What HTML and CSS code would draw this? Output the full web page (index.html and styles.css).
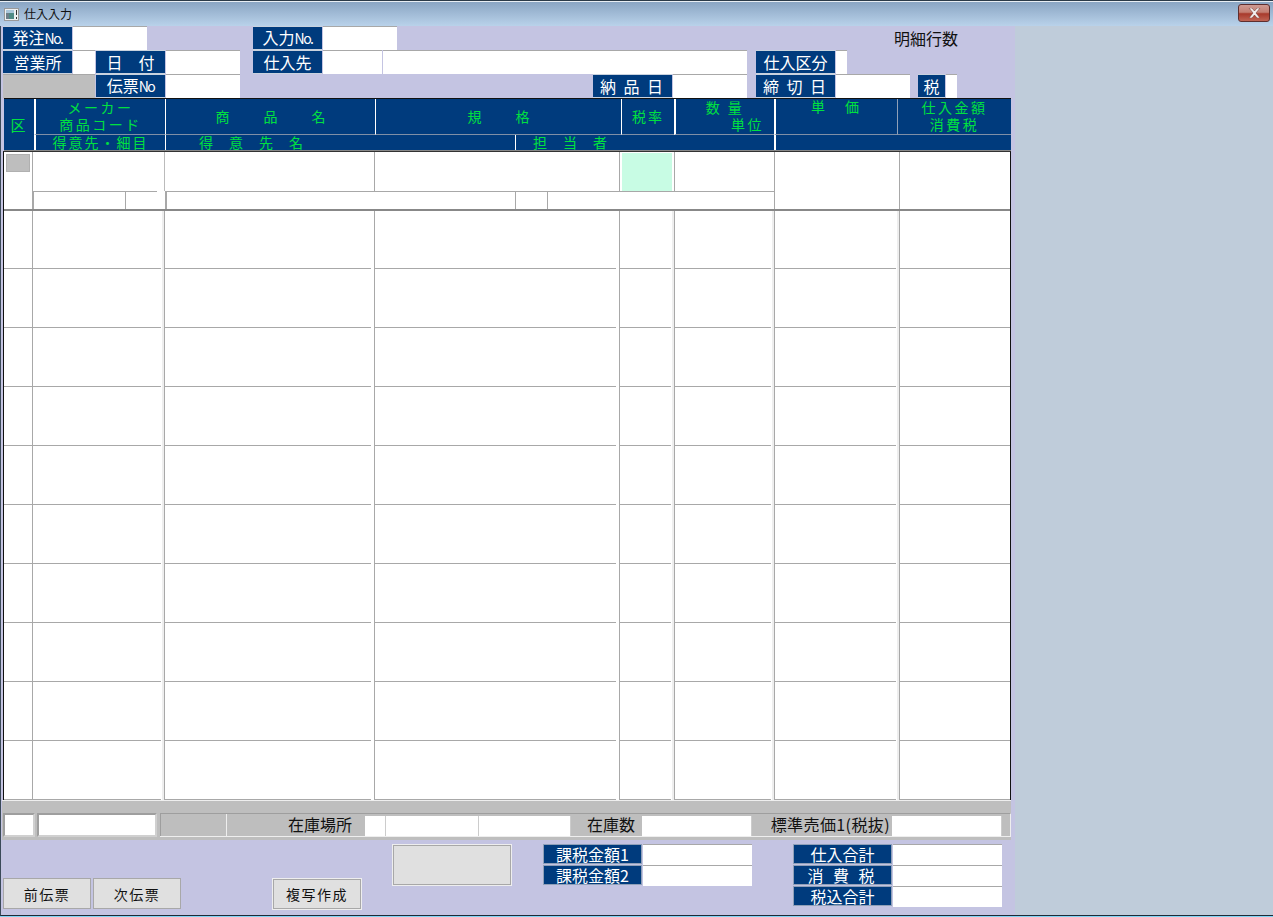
FILE: index.html
```html
<!DOCTYPE html>
<html lang="ja">
<head>
    <meta charset="UTF-8">
    <title>仕入入力</title>
    <link rel="stylesheet" href="styles.css">
</head>
<body>
    <div class="window">
        <div class="titlebar">
            <svg class="app-icon" width="15" height="13" viewBox="0 0 15 13">
                <rect x="0.5" y="0.5" width="14" height="12" fill="#eef0f2" stroke="#9a9a9a"/>
                <rect x="2" y="2" width="8" height="9" fill="#4f8a86"/>
                <rect x="2" y="2" width="8" height="3" fill="#a9c6da"/>
                <rect x="2" y="5" width="3" height="6" fill="#6d7f8a"/>
                <rect x="12" y="2" width="1" height="5" fill="#333"/>
                <rect x="12" y="9" width="1" height="2" fill="#333"/>
            </svg>
            <span class="title">仕入入力</span>
            <div class="close-btn">
                <svg width="13" height="10" viewBox="0 0 13 10">
                    <path d="M1 0h3l2.500 3L9 0h3L8 5l4 5H9L6.500 7 4 10H1l4-5z" fill="#f2eeee" stroke="#6a3028" stroke-width="0.5"/>
                </svg>
            </div>
        </div>

        <div class="client">
            <div class="form">
                <!-- header fields -->
                <div class="top-row">
                    <div class="label w69"><span>発注<span class="no">No.</span></span></div>
                    <div class="field w74"></div>
                    <div class="label w69 ml106"><span>入力<span class="no">No.</span></span></div>
                    <div class="field w74"></div>
                    <div class="line-count">明細行数</div>
                </div>
                <div class="top-row">
                    <div class="label w69">営業所</div>
                    <div class="field w22"></div>
                    <div class="label w69">日　付</div>
                    <div class="field w74"></div>
                    <div class="label w69 ml13">仕入先</div>
                    <div class="field w59"></div>
                    <div class="field w364"></div>
                    <div class="label w79 ml9">仕入区分</div>
                    <div class="field w11"></div>
                </div>
                <div class="top-row">
                    <div class="gray-box"></div>
                    <div class="label w69"><span>伝票<span class="no">No</span></span></div>
                    <div class="field w74"></div>
                    <div class="label w79 ml353 spaced">納 品 日</div>
                    <div class="field w74"></div>
                    <div class="label w79 ml9 spaced">締 切 日</div>
                    <div class="field w74"></div>
                    <div class="label w27 ml8">税</div>
                    <div class="field w11"></div>
                </div>

                <!-- column titles -->
                <div class="table-head">
                    <div class="th th-ku">区</div>
                    <div class="th two-line sep-w2"><span>メーカー</span><span>商品コード</span></div>
                    <div class="th wide sep-w">商　品　名</div>
                    <div class="th wide span-2 sep-w">規　格</div>
                    <div class="th sep-w">税率</div>
                    <div class="th two-line sep-w2"><span>数 量</span><span class="unit">単位</span></div>
                    <div class="th th-top sep-w2">単　価</div>
                    <div class="th two-line sep-g"><span>仕入金額</span><span>消費税</span></div>
                    <div class="th low sep-w2">得意先・細目</div>
                    <div class="th low low-name span-2 sep-w">得　意　先　名</div>
                    <div class="th low low-staff span-3 sep-w">担　当　者</div>
                    <div class="th low span-2 sep-w2"></div>
                </div>

                <!-- detail rows -->
                <div class="table-body">
                    <div class="current-row">
                        <div class="cur-no"><div class="row-btn"></div></div>
                        <div class="cur-c2"></div>
                        <div class="cur-c3"></div>
                        <div class="cur-c4"></div>
                        <div class="cur-tax"><div class="tax-box"></div></div>
                        <div class="cur-c6"></div>
                        <div class="cur-c7"></div>
                        <div class="cur-c8"></div>
                        <div class="sub s1"></div>
                        <div class="sub s2"></div>
                        <div class="sub s3"></div>
                        <div class="sub s4"></div>
                        <div class="sub s5"></div>
                    </div>
                    <div class="row"><div></div><div></div><div></div><div></div><div></div><div></div><div></div><div></div></div>
                    <div class="row"><div></div><div></div><div></div><div></div><div></div><div></div><div></div><div></div></div>
                    <div class="row"><div></div><div></div><div></div><div></div><div></div><div></div><div></div><div></div></div>
                    <div class="row"><div></div><div></div><div></div><div></div><div></div><div></div><div></div><div></div></div>
                    <div class="row"><div></div><div></div><div></div><div></div><div></div><div></div><div></div><div></div></div>
                    <div class="row"><div></div><div></div><div></div><div></div><div></div><div></div><div></div><div></div></div>
                    <div class="row"><div></div><div></div><div></div><div></div><div></div><div></div><div></div><div></div></div>
                    <div class="row"><div></div><div></div><div></div><div></div><div></div><div></div><div></div><div></div></div>
                    <div class="row"><div></div><div></div><div></div><div></div><div></div><div></div><div></div><div></div></div>
                    <div class="row"><div></div><div></div><div></div><div></div><div></div><div></div><div></div><div></div></div>
                </div>

                <!-- stock strip -->
                <div class="stock-strip">
                    <div class="sunken sunken-no"></div>
                    <div class="sunken sunken-name"></div>
                    <div class="stock-main">
                        <div class="stock-gray"></div>
                        <div class="stock-text st-place">在庫場所</div>
                        <div class="stock-field sf-20"></div>
                        <div class="stock-field sf-93"></div>
                        <div class="stock-field sf-91"></div>
                        <div class="stock-text st-qty">在庫数</div>
                        <div class="stock-field sf-110"></div>
                        <div class="stock-text st-price">標準売価1(税抜)</div>
                        <div class="stock-field sf-110"></div>
                    </div>
                </div>

                <!-- totals and buttons -->
                <div class="footer">
                    <div class="btn-group">
                        <div class="btn w88">前伝票</div>
                        <div class="btn w88">次伝票</div>
                    </div>
                    <div class="btn copy-btn">複写作成</div>
                    <div class="blank-btn"></div>
                    <div class="totals tax-totals">
                        <div class="total-row"><div class="total-label">課税金額1</div><div class="total-field"></div></div>
                        <div class="total-row"><div class="total-label">課税金額2</div><div class="total-field"></div></div>
                    </div>
                    <div class="totals">
                        <div class="total-row"><div class="total-label">仕入合計</div><div class="total-field"></div></div>
                        <div class="total-row"><div class="total-label spaced">消 費 税</div><div class="total-field"></div></div>
                        <div class="total-row"><div class="total-label">税込合計</div><div class="total-field"></div></div>
                    </div>
                </div>
            </div>
            <div class="side"></div>
        </div>
    </div>
</body>
</html>
```

FILE: styles.css
```css
* {
    box-sizing: border-box;
}
html, body {
    margin: 0;
    padding: 0;
}
body {
    width: 1273px;
    height: 917px;
    overflow: hidden;
    font-family: "Noto Sans CJK JP", "Noto Sans", sans-serif;
    background: #bfccda;
}
.window {
    height: 917px;
    display: flex;
    flex-direction: column;
    border-top: 1px solid #2b3a48;
    border-bottom: 1px solid #7fd4f4;
}
.titlebar {
    height: 25px;
    flex: none;
    display: flex;
    align-items: center;
    padding-left: 4px;
    background: linear-gradient(#8aa5c3, #b9d2ea);
    border-top: 1px solid #e8eef4;
}
.app-icon {
    flex: none;
}
.title {
    margin-left: 5px;
    font-size: 12px;
    color: #111;
    line-height: 14px;
}
.close-btn {
    margin-left: auto;
    margin-right: 3px;
    width: 32px;
    height: 18px;
    margin-top: -3px;
    display: flex;
    align-items: center;
    justify-content: center;
    border: 1px solid #5e2e2e;
    border-radius: 3px;
    background: linear-gradient(#cf9a92 0%, #c47e72 45%, #a83a2c 55%, #bf6454 100%);
}
.client {
    flex: 1;
    display: flex;
    border-bottom: 1px solid #1d2a36;
    border-left: 1px solid #3b4a58;
}
.form {
    width: 1014px;
    background: #c4c4e2;
    padding-left: 2px;
}
.side {
    flex: 1;
    background: #bfccda;
}

/* header fields */
.top-row {
    height: 24px;
    display: flex;
    position: relative;
}
.label {
    height: 24px;
    padding-bottom: 1px;
    display: flex;
    align-items: center;
    justify-content: center;
    flex: none;
    background: #003b7d;
    color: #fff;
    font-size: 16px;
    line-height: 20px;
    border-top: 1px solid #c9d2de;
    border-bottom: 1px solid #c9d2de;
    margin-right: 1px;
    white-space: pre;
}
.label.spaced {
    letter-spacing: 2px;
}
.no {
    letter-spacing: -1.5px;
    font-size: 14px;
}
.field {
    height: 24px;
    flex: none;
    background: #fff;
    border-top: 1px solid #a8a8a8;
    margin-right: 1px;
}
.gray-box {
    width: 92px;
    height: 24px;
    margin-right: 1px;
    background: #bebebe;
    border-top: 1px solid #a8a8a8;
}
.line-count {
    position: absolute;
    left: 891px;
    top: 1px;
    font-size: 16px;
    line-height: 22px;
    color: #111;
}
.w11 { width: 11px; }
.w22 { width: 22px; }
.w27 { width: 27px; }
.w59 { width: 59px; }
.w69 { width: 69px; }
.w74 { width: 74px; }
.w79 { width: 79px; }
.w364 { width: 364px; }
.ml8 { margin-left: 7px; }
.ml9 { margin-left: 8px; }
.ml13 { margin-left: 12px; }
.ml106 { margin-left: 105px; }
.ml353 { margin-left: 352px; }

/* column titles */
.table-head {
    margin-left: 1px;
    width: 1007px;
    height: 53px;
    display: grid;
    grid-template-columns: 30px 131px 210px 140px 106px 53px 100px 123px 114px;
    grid-template-rows: 36px 15px;
    background: #003b7d;
    border-top: 1px solid #111;
    border-bottom: 1px solid #888;
}
.th {
    color: #00e040;
    font-size: 14px;
    line-height: 17px;
    letter-spacing: 2px;
    display: flex;
    align-items: center;
    justify-content: center;
    white-space: pre;
    border-bottom: 1px solid #7f8fa6;
}
.th-ku {
    grid-row: 1 / span 2;
    border-bottom: none;
    letter-spacing: 0;
    font-size: 15px;
    padding-right: 2px;
}
.th-top {
    align-items: flex-start;
    letter-spacing: 3px;
    line-height: 15px;
}
.two-line {
    flex-direction: column;
    letter-spacing: 2.500px;
    padding-bottom: 2px;
}
.two-line span {
    display: block;
}
.two-line .unit {
    align-self: flex-end;
    margin-right: 10px;
}
.wide {
    letter-spacing: 10px;
    padding-left: 10px;
}
.low {
    border-bottom: none;
    letter-spacing: 2px;
    line-height: 15px;
    padding-bottom: 1px;
}
.low-name, .low-staff {
    justify-content: flex-start;
    letter-spacing: 1px;
}
.low-name {
    padding-left: 33px;
}
.low-staff {
    padding-left: 17px;
}
.span-2 { grid-column: span 2; }
.span-3 { grid-column: span 3; }
.sep-w { border-left: 1px solid #fff; }
.sep-w2 { border-left: 2px solid #fff; }
.sep-g { border-left: 1px solid #8fa0b8; }

/* detail rows */
.table-body {
    width: 1008px;
    height: 649px;
    background: #fff;
    border-left: 1px solid #111;
    border-right: 1px solid #111;
    border-top: 1px solid #333;
}
.row, .current-row {
    display: grid;
    height: 59px;
}
.row {
    grid-template-columns: 29px 132px 210px 245px 55px 100px 125px 1fr;
}
.row:nth-child(2) {
    height: 58px;
}
/* the row line stops a little short of the column line */
.row > div {
    border-right: 1px solid #a8a8a8;
    background: linear-gradient(#a8a8a8, #a8a8a8) left bottom / calc(100% - 3px) 1px no-repeat;
}
.row > div:nth-child(2),
.row > div:nth-child(5),
.row > div:nth-child(6),
.row > div:nth-child(7) {
    box-shadow: inset -2px 0 0 #eee;
}
.row > div:nth-child(1) {
    background-size: 100% 1px;
}
.row > div:nth-child(8) {
    border-right: none;
    background-size: 100% 1px;
}
.current-row {
    grid-template-columns: 29px 93px 39px 210px 141px 32px 72px 55px 100px 125px 1fr;
    grid-template-rows: 39px 18px 2px;
}
.cur-no {
    grid-column: 1;
    grid-row: 1 / span 2;
    border-right: 1px solid #a8a8a8;
    padding: 2px 0 0 2px;
}
.row-btn {
    width: 24px;
    height: 18px;
    background: #bebebe;
    border: 1px solid #b0b0b0;
}
.cur-c2 { grid-column: 2 / span 2; grid-row: 1; border-right: 1px solid #bbb; }
.cur-c3 { grid-column: 4; grid-row: 1; border-right: 1px solid #a8a8a8; }
.cur-c4 { grid-column: 5 / span 3; grid-row: 1; border-right: 1px solid #a8a8a8; }
.cur-tax {
    grid-column: 8;
    grid-row: 1;
    border-right: 1px solid #a8a8a8;
    padding: 1px 2px 0 2px;
}
.tax-box {
    width: 50px;
    height: 38px;
    background: #c8fce4;
}
.cur-c6 { grid-column: 9; grid-row: 1; border-right: 1px solid #a8a8a8; }
.cur-c7 { grid-column: 10; grid-row: 1 / span 2; border-right: 1px solid #a8a8a8; }
.cur-c8 { grid-column: 11; grid-row: 1 / span 2; }
.sub {
    grid-row: 2;
    border-top: 1px solid #a8a8a8;
    border-right: 1px solid #a8a8a8;
}
.s1 { grid-column: 2; border-left: 1px solid #a8a8a8; }
.s2 { grid-column: 3; margin-right: 8px; border-right: none; }
.s3 { grid-column: 4 / span 2; border-left: 2px solid #a8a8a8; }
.s4 { grid-column: 6; }
.s5 { grid-column: 7 / span 3; }
.current-row::after {
    content: "";
    grid-column: 1 / -1;
    grid-row: 3;
    background: #888;
}

/* stock strip */
.stock-strip {
    width: 1009px;
    height: 40px;
    margin-left: -1px;
    padding: 12px 0 0 1px;
    display: flex;
    background: #bebebe;
    border-top: 1px solid #eee;
}
.sunken {
    height: 24px;
    background: #fff;
    border: 2px solid #d0d0d0;
    border-top-color: #9e9e9e;
    border-left-color: #9e9e9e;
}
.sunken-no { width: 32px; margin-right: 2px; }
.sunken-name { width: 120px; margin-right: 3px; }
.stock-main {
    flex: 1;
    height: 24px;
    display: flex;
    border-top: 1px solid #9e9e9e;
    border-bottom: 1px solid #eee;
    border-right: 1px solid #eee;
}
.stock-gray {
    width: 67px;
    flex: none;
    border-left: 1px solid #9e9e9e;
    border-right: 1px solid #eee;
}
.stock-text {
    flex: none;
    font-size: 16px;
    line-height: 20px;
    color: #111;
    text-align: right;
    white-space: nowrap;
}
.st-place { width: 125px; margin-right: 13px; }
.st-qty { width: 71px; padding-right: 7px; }
.st-price { width: 140px; padding-right: 2px; letter-spacing: 0.4px; }
.stock-field {
    height: 20px;
    margin-top: 2px;
    flex: none;
    background: #fff;
    border-right: 1px solid #ccc;
}
.sf-20 { width: 21px; }
.sf-93 { width: 93px; }
.sf-91 { width: 92px; }
.sf-110 { width: 110px; }

/* totals and buttons */
.footer {
    height: 75px;
    display: flex;
    align-items: flex-start;
    padding-top: 4px;
}
.btn-group {
    display: flex;
    gap: 2px;
    margin-top: 34px;
}
.btn {
    height: 31px;
    display: flex;
    align-items: center;
    justify-content: center;
    flex: none;
    font-size: 14px;
    color: #111;
    letter-spacing: 1.500px;
    background: #e0e0e0;
    border: 1px solid #a8a8a8;
}
.w88 { width: 88px; }
.copy-btn {
    width: 88px;
    height: 30px;
    margin: 35px 0 0 92px;
    outline: 1px solid #eee;
}
.blank-btn {
    width: 118px;
    height: 40px;
    margin: 1px 0 0 32px;
    background: #e0e0e0;
    border: 1px solid #a8a8a8;
    outline: 1px solid #eee;
}
.totals {
    display: flex;
    flex-direction: column;
    width: 209px;
}
.tax-totals {
    margin: 0 41px 0 32px;
}
.total-row {
    height: 21px;
    display: flex;
}
.total-label {
    width: 99px;
    height: 20px;
    margin-right: 1px;
    background: #003b7d;
    color: #fff;
    font-size: 16px;
    line-height: 19px;
    text-align: center;
    border: 1px solid #8fa0b8;
}
.total-label.spaced {
    letter-spacing: 3px;
}
.total-field {
    width: 109px;
    height: 21px;
    background: #fff;
    border-top: 1px solid #a8a8a8;
}
```
